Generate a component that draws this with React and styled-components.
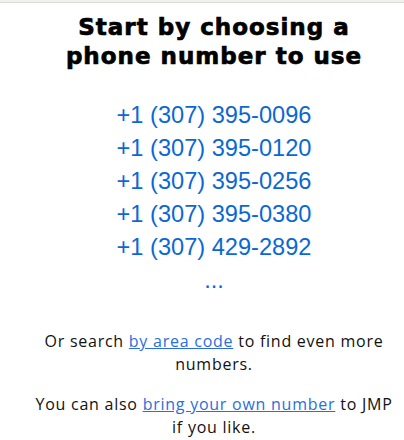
import React from "react";
import styled, { createGlobalStyle } from "styled-components";

const GlobalStyle = createGlobalStyle`
  html, body {
    margin: 0;
    padding: 0;
    background: #ffffff;
  }
`;

const Page = styled.div`
  width: 404px;
  min-height: 440px;
  background: #ffffff;
`;

const TopBar = styled.div`
  height: 2px;
  background: #f1f0ee;
  border-bottom: 1px solid #dcdad6;
`;

const Content = styled.main`
  width: 368px;
  margin-left: 30px;
  padding-top: 10px;
  text-align: center;
`;

const Title = styled.h1`
  margin: 0;
  font-family: "DejaVu Sans", sans-serif;
  font-weight: 700;
  font-size: 23px;
  letter-spacing: 1px;
  line-height: 29px;
  color: #000;
  -webkit-text-stroke: 0.7px #000;
  white-space: nowrap;
`;

const NumberList = styled.ul`
  list-style: none;
  margin: 28px 0 0;
  padding: 0;
`;

const NumberItem = styled.li`
  font-family: "Liberation Sans", Arial, sans-serif;
  font-size: 23.6px;
  line-height: 33px;
  color: #0b68d2;
`;

const Text = styled.p`
  margin: ${({ $first }) => ($first ? "33px" : "17px")} 0 0;
  font-family: "Open Sans", sans-serif;
  font-weight: 500;
  font-size: 16px;
  letter-spacing: 0.75px;
  line-height: 23px;
  color: #111;
`;

const TextLink = styled.a`
  color: #2a6fdb;
  text-decoration: underline;
`;

const numbers = [
  "+1 (307) 395-0096",
  "+1 (307) 395-0120",
  "+1 (307) 395-0256",
  "+1 (307) 395-0380",
  "+1 (307) 429-2892",
];

export default function App() {
  return (
    <Page>
      <GlobalStyle />
      <TopBar />
      <Content>
        <Title>
          Start by choosing a
          <br />
          phone number to use
        </Title>
        <NumberList>
          {numbers.map((n) => (
            <NumberItem key={n}>{n}</NumberItem>
          ))}
          <NumberItem>...</NumberItem>
        </NumberList>
        <Text $first>
          Or search <TextLink href="#">by area code</TextLink> to find even more
          numbers.
        </Text>
        <Text>
          You can also <TextLink href="#">bring your own number</TextLink> to JMP
          if you like.
        </Text>
      </Content>
    </Page>
  );
}
